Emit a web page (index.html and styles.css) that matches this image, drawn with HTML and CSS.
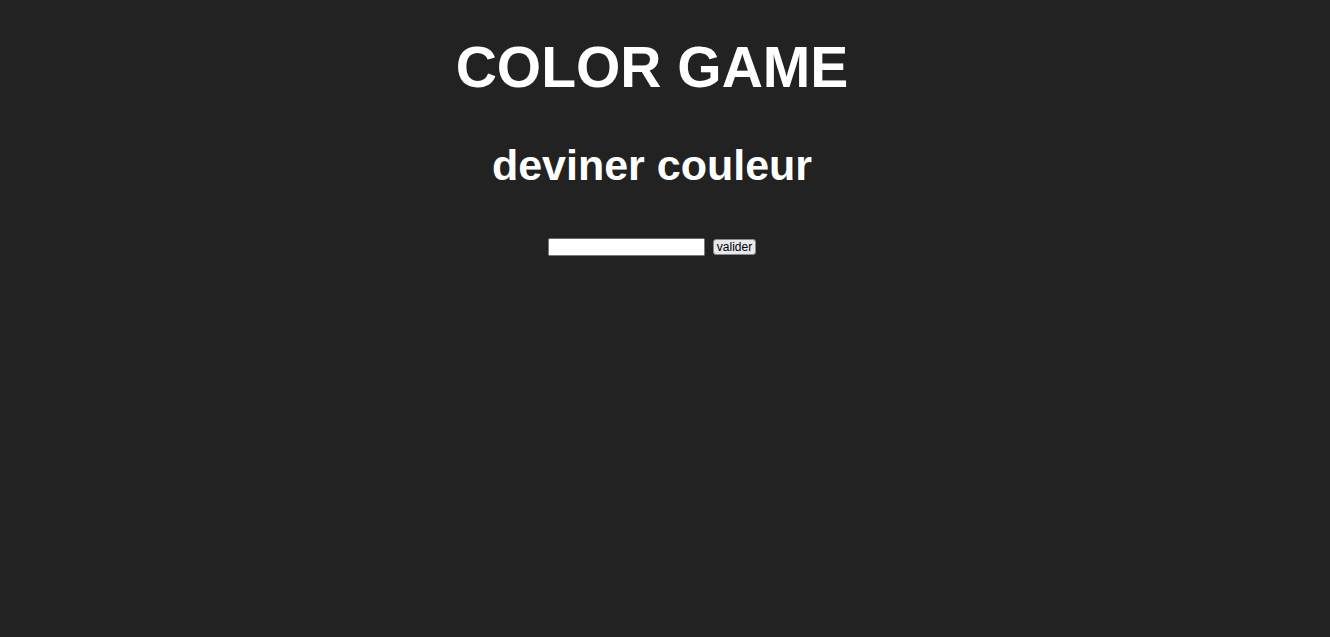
FILE: index.html
```html
<!DOCTYPE html>
<html lang="fr">
<head>
<meta charset="utf-8">
<title>Color Game</title>
<link rel="stylesheet" href="styles.css">
</head>
<body>
<main class="page">
<h1 class="title">COLOR GAME</h1>
<h2 class="subtitle">deviner couleur</h2>
<form class="guess">
<input class="guess-input" type="text">
<button class="guess-btn" type="button">valider</button>
</form>
</main>
</body>
</html>
```
FILE: styles.css
```css
html, body {
  background: #222222;
}
body {
  margin: 0;
  font-family: "Liberation Sans", Arial, sans-serif;
  color: #ffffff;
}
.page {
  width: 1304px;
  padding-top: 34px;
  text-align: center;
}
.title {
  font-size: 57px;
  margin: 0;
  line-height: 66px;
}
.subtitle {
  font-size: 43px;
  margin: 40px 0 0;
  line-height: 50px;
}
.guess {
  margin-top: 48px;
  display: flex;
  justify-content: center;
  align-items: center;
  gap: 8px;
}
.guess-input {
  width: 157px;
  height: 18px;
  box-sizing: border-box;
  border: 1px solid #7a7a7a;
  border-top-color: #6a6a6a;
  border-radius: 2px;
  background: #fff;
  padding: 0 2px;
  margin: 0;
}
.guess-btn {
  font-family: "Liberation Sans", Arial, sans-serif;
  font-size: 12px;
  width: 43px;
  height: 16px;
  line-height: 14px;
  padding: 0;
  margin: 0;
  border: 1px solid #8a8a8a;
  border-radius: 3px;
  background: #e8e8ec;
  color: #000;
}
```
